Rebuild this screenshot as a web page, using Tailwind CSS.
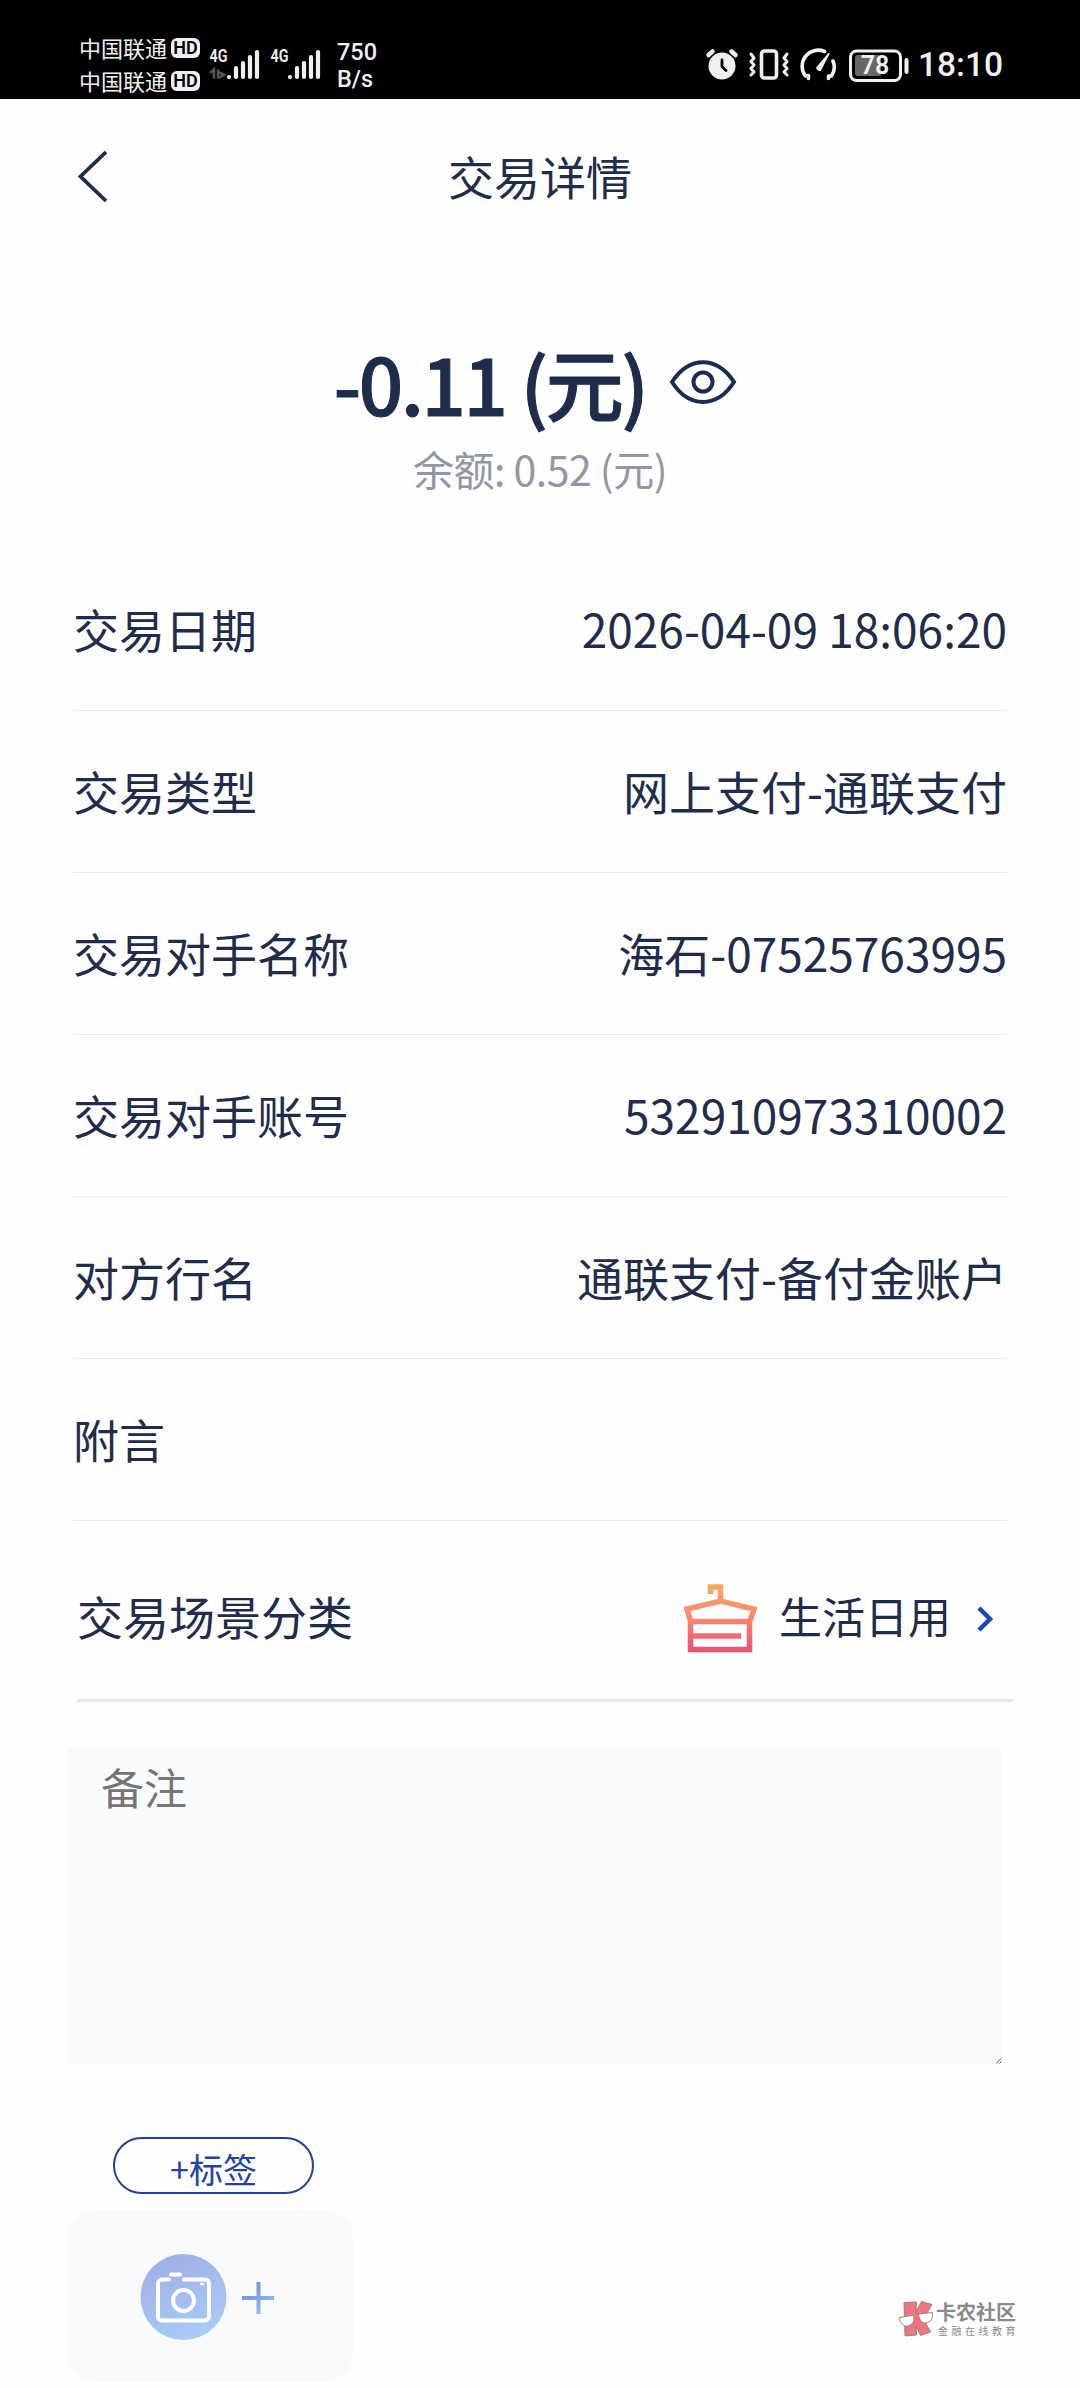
<!DOCTYPE html>
<html lang="zh-CN">
<head>
<meta charset="utf-8">
<title>交易详情</title>
<script src="https://cdn.jsdelivr.net/npm/@tailwindcss/browser@4"></script>
</head>
<body class="h-[2388px] w-[1080px] overflow-hidden bg-[#fefefe] font-['Noto_Sans_CJK_SC',sans-serif] text-[#1f2c4b]">
<!-- status bar -->
<div class="flex h-[99px] justify-between bg-black pt-7 pr-[77px] pl-[79px] text-[#f0f0f0]">
  <div class="flex">
    <div class="mt-[3px] flex flex-col gap-[1px] text-[22px] leading-8">
      <div class="flex h-8 items-center gap-1"><span class="pb-px">中国联通</span><span class="mt-px flex h-[20px] w-[29px] items-center justify-center rounded-md bg-[#f0f0f0] font-['Roboto',sans-serif] text-[18px] font-semibold text-black">HD</span></div>
      <div class="flex h-8 items-center gap-1"><span class="pb-px">中国联通</span><span class="mt-px flex h-[20px] w-[29px] items-center justify-center rounded-md bg-[#f0f0f0] font-['Roboto',sans-serif] text-[18px] font-semibold text-black">HD</span></div>
    </div>
    <svg class="mt-4 ml-[9px] h-[40px] w-[120px]" viewBox="210 44 120 40" fill="#f0f0f0">
      <g font-family="Roboto" font-weight="600" font-size="19"><text x="210.500" y="62" textLength="18" lengthAdjust="spacingAndGlyphs">4G</text><text x="271.500" y="62" textLength="18" lengthAdjust="spacingAndGlyphs">4G</text></g>
      <path d="M211 73l4-3.500v9M219 69.500v9M220 78l5-3.500-5-2" stroke="#555" stroke-width="2.500" fill="none"/>
      <g stroke="#f0f0f0" stroke-width="4.200" stroke-linecap="round"><path d="M230 77v0M237 77v-9M244 77v-14M251 77v-20M258 77v-25M291 77v0M298 77v-9M305 77v-14M312 77v-20M319 77v-25"/></g>
    </svg>
    <div class="mt-[11px] ml-[8px] flex w-[40px] flex-col font-['Roboto',sans-serif] text-[23.500px] leading-[27px] font-medium"><span>750</span><span>B/s</span></div>
  </div>
  <div class="flex">
    <svg class="mt-5 h-[36px] w-[204px]" viewBox="705 48 204 36" fill="none" stroke="#f0f0f0" stroke-linecap="round" stroke-linejoin="round">
      <circle cx="722" cy="66" r="13.500" fill="#f0f0f0" stroke="none"/><path d="M722 60v6.500l4 4" stroke="#000" stroke-width="2.800"/><path d="M708.500 55l4-3.500M731.500 51.500l4 3.500" stroke-width="4.500"/>
      <rect x="761.500" y="51" width="15" height="27" rx="3" stroke-width="3.600"/><path d="M751 54l3 4-3 3.500 3 3.500-3 3.500 3 3.500-3 3M787 54l-3 4 3 3.500-3 3.500 3 3.500-3 3.500 3 3" stroke-width="3"/>
      <path d="M808.500 78.500v-3l-3 .5a16 16 0 0 1 19-24.500M833 61a16 16 0 0 1-1.500 15l-3 0v2.500" stroke-width="3.600"/><path d="M817 67.500l12-14-8.500 16.500a2.500 2.500 0 0 1-3.500-2.500z" fill="#f0f0f0" stroke-width="1.500"/>
      <rect x="850.500" y="51" width="50" height="29.500" rx="6" stroke-width="3"/><rect x="855" y="55" width="26" height="21" rx="3" fill="#666" stroke="none"/><path d="M906.500 60v12" stroke-width="4"/>
      <text x="875" y="74" text-anchor="middle" font-family="Roboto" font-weight="600" font-size="25" fill="#f0f0f0" stroke="none">78</text>
    </svg>
    <span class="mt-[17px] ml-[9px] w-[85px] font-['Roboto',sans-serif] text-[33.500px] leading-10 font-medium whitespace-nowrap">18:10</span>
  </div>
</div>

<!-- title bar -->
<header class="grid h-[156px] grid-cols-[1fr_auto_1fr] items-center px-[77px]">
  <svg class="mb-[2px] h-[54px] w-[32px]" viewBox="0 0 32 54" fill="none" stroke="#1f2c4b" stroke-width="3.800"><path d="M29 3L3.500 27.500 29 52"/></svg>
  <h1 class="pb-[5px] text-[46px] leading-[60px]">交易详情</h1>
</header>

<!-- amount -->
<section class="flex h-[294px] flex-col items-center pt-[81px]">
  <div class="mr-[10px] flex h-[96px] items-center">
    <span class="pb-[5px] text-[78px] leading-[96px] font-medium tracking-[-2.500px] [-webkit-text-stroke:1px_#1c2b50]">-0.11 (元)</span>
    <svg class="mb-[5px] ml-[22px] h-[46px] w-[68px]" viewBox="0 0 68 46" fill="none" stroke="#1c2b50" stroke-width="4"><path d="M3 23C20-3.500 48-3.500 65 23 48 49.500 20 49.500 3 23z"/><circle cx="34" cy="23" r="9.500"/></svg>
  </div>
  <div class="mt-[8px] text-[41px] leading-[56px] tracking-[-0.500px] text-[#9297a8]">余额: 0.52 (元)</div>
</section>

<!-- details -->
<dl class="flex flex-col px-[73px] text-[46px] leading-[60px]">
  <div class="flex h-[162px] items-center justify-between border-b border-[#ebebed] pb-[3px]"><dt>交易日期</dt><dd>2026-04-09 18:06:20</dd></div>
  <div class="flex h-[162px] items-center justify-between border-b border-[#ebebed] pb-[3px]"><dt>交易类型</dt><dd>网上支付-通联支付</dd></div>
  <div class="flex h-[162px] items-center justify-between border-b border-[#ebebed] pb-[3px]"><dt>交易对手名称</dt><dd>海石-07525763995</dd></div>
  <div class="flex h-[162px] items-center justify-between border-b border-[#ebebed] pb-[3px]"><dt>交易对手账号</dt><dd>532910973310002</dd></div>
  <div class="flex h-[162px] items-center justify-between border-b border-[#ebebed] pb-[3px]"><dt>对方行名</dt><dd>通联支付-备付金账户</dd></div>
  <div class="flex h-[162px] items-center justify-between border-b border-[#ebebed] pb-[3px]"><dt>附言</dt><dd></dd></div>
</dl>

<!-- category -->
<div class="mr-[67px] ml-[77px] flex h-[181px] items-center justify-between border-b-[3px] border-[#e6e8ee] pt-[18px] pr-[19px]">
  <span class="pb-[9px] text-[46px] leading-[60px]">交易场景分类</span>
  <div class="flex items-center">
    <svg class="h-[70px] w-[74px]" viewBox="685 1584 74 70" fill="none" stroke="url(#hanger)" stroke-width="5.500">
      <defs><linearGradient id="hanger" gradientUnits="userSpaceOnUse" x1="0" y1="1584" x2="0" y2="1652"><stop stop-color="#f5ad60"/><stop offset=".5" stop-color="#f98670"/><stop offset="1" stop-color="#ec5078"/></linearGradient></defs>
      <path d="M712.500 1594v-7h10v14M692.500 1649.500h59v-28h-59zM692.500 1621l-3.500-12 33.500-8 33.500 8-4 12M694 1636h49"/>
    </svg>
    <span class="ml-[22px] pb-[9px] text-[43px] leading-[60px]">生活日用</span>
    <svg class="ml-[26px] h-[26px] w-[17px]" viewBox="0 0 17 26" fill="none" stroke="#1c46b4" stroke-width="4.500"><path d="M2 2l11 11L2 24"/></svg>
  </div>
</div>

<!-- remark -->
<div class="relative mt-[46px] ml-[67px] h-[317px] w-[935px] bg-[#f9fafc] px-[34px] pt-[8px] text-[43px] leading-[60px] text-[#757575]">备注
  <svg class="absolute right-0 bottom-[1px] h-1.5 w-1.5" viewBox="0 0 6 6" stroke="#555" fill="none"><path d="M0 5.500l5-5M3.500 5.500l2-2"/></svg>
</div>

<button class="mt-[72px] ml-[113px] flex h-[57px] w-[201px] items-center justify-center rounded-full border-2 border-[#23429a] text-[34px] leading-[50px] text-[#2243a5]"><span class="mt-1.5">+标签</span></button>

<div class="flex">
  <div class="mt-4 ml-[67px] flex h-[172px] w-[286px] items-center rounded-[28px] bg-[#f9fafc] pl-[73px]">
    <svg class="h-[88px] w-[136px]" viewBox="140 2252 136 88" fill="none">
      <defs><linearGradient id="cam" x1=".3" y1="0" x2=".7" y2="1"><stop stop-color="#a1aee6"/><stop offset="1" stop-color="#a9cdf7"/></linearGradient><linearGradient id="plus" gradientUnits="userSpaceOnUse" x1="245" y1="2282" x2="272" y2="2314"><stop stop-color="#7288cf"/><stop offset="1" stop-color="#94c8f7"/></linearGradient></defs>
      <circle cx="183.500" cy="2297" r="43" fill="url(#cam)"/>
      <g stroke="#fff" stroke-width="4" stroke-linecap="round" stroke-linejoin="round"><path d="M169 2279.500h-7a4 4 0 0 0-4 4v33a4 4 0 0 0 4 4h43a4 4 0 0 0 4-4v-33a4 4 0 0 0-4-4h-21M171 2274.500h9"/><circle cx="183.500" cy="2300.500" r="10.500"/><path d="M201 2284h2" stroke-width="2.500"/></g>
      <path d="M242 2298h32M258.500 2282v32" stroke="url(#plus)" stroke-width="4"/>
    </svg>
  </div>
  <!-- community mark -->
  <div class="mt-[107px] ml-[546px] flex h-10 text-[#8a8a8a]">
    <svg class="h-[36px] w-[36px]" viewBox="0 0 36 36" stroke="#8c8686" stroke-width="1"><path d="M5 1.500L17.500 1l-.5 9.500L22.500.500 33 3.500 24.500 18 31.500 31l-10 3.500L17 25l.5 9L6 35z" fill="#f0747e"/><path d="M.5 16.500L14.500 14c1.500 6-1.500 10.500-6 11S1 22 .500 16.500zM19.500 13l14-1.500c.5 6.500-2.500 10-6.500 10.500s-7-3.500-7.500-9z" fill="#fff"/></svg>
    <div class="flex flex-col whitespace-nowrap"><span class="ml-[1px] text-[20px] leading-[22px] font-bold">卡农社区</span><span class="mt-[1px] ml-[3px] text-[10px] leading-[14px] tracking-[3.500px]">金融在线教育</span></div>
  </div>
</div>
</body>
</html>
